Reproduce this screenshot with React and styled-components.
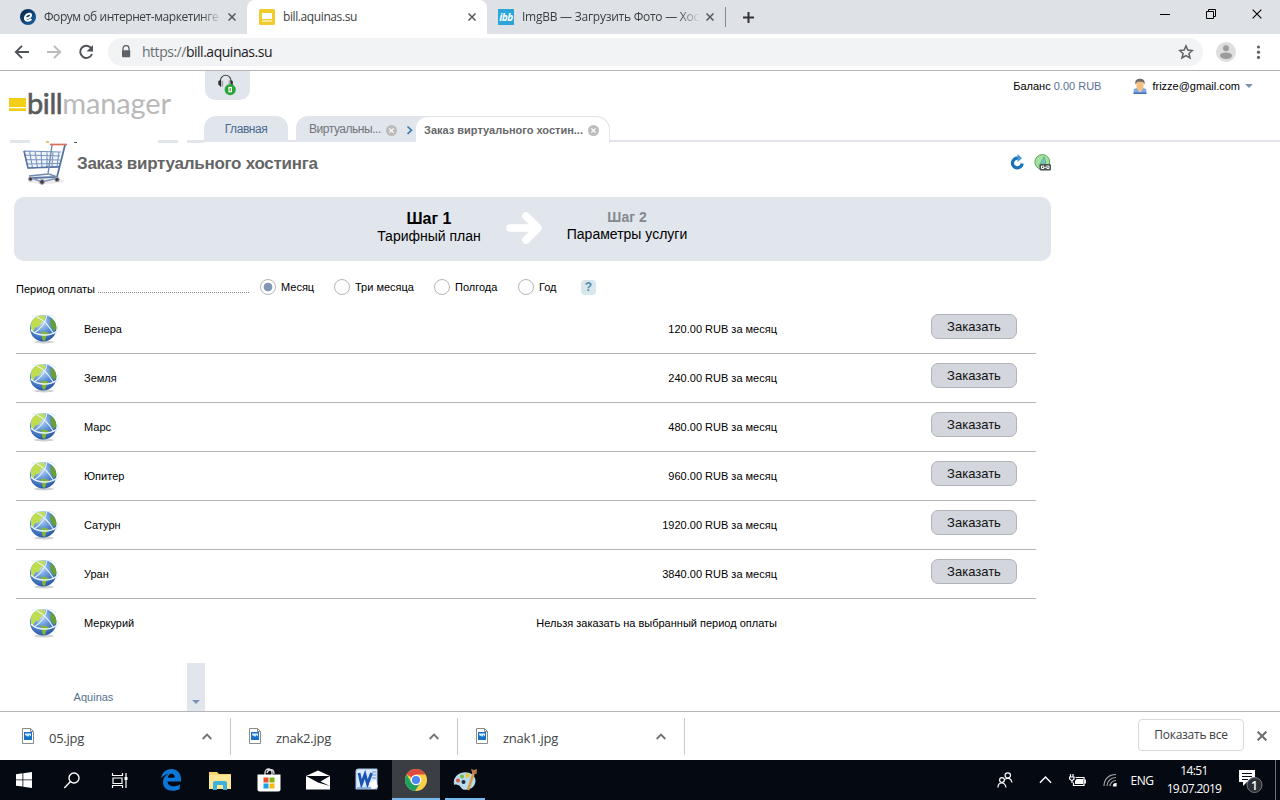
import React, { Fragment } from 'react';
import styled, { createGlobalStyle } from 'styled-components';

const GlobalStyle = createGlobalStyle`
	* {
		box-sizing: border-box;
	}

	body {
		margin: 0;
		background: #fff;
		overflow: hidden;
		font-family: "Liberation Sans", Arial, sans-serif;
		font-size: 11px;
		color: #000;
	}

	svg {
		display: block;
		flex: none;
	}
`

const systemFont = '"Open Sans", "Noto Sans", sans-serif';

const Screen = styled.div`
	width: 1280px;
	height: 800px;
	display: flex;
	flex-direction: column;
	overflow: hidden;
`

/* browser */

const TabStrip = styled.div`
	height: 34px;
	flex: none;
	display: flex;
	background: #dee1e6;
	font-family: ${systemFont};
`

const BrowserTab = styled.div`
	width: ${props => props.$width}px;
	height: 34px;
	display: flex;
	align-items: center;
	padding: 0 11px 0 ${props => props.$left}px;
	background: ${props => props.$active ? '#fff' : 'transparent'};
	border-radius: ${props => props.$active ? '8px 8px 0 0' : '0'};
`

const BrowserTabTitle = styled.span`
	flex: 1;
	margin: 0 6px 0 8px;
	white-space: nowrap;
	font-size: 12px;
	line-height: 18px;
	letter-spacing: ${props => props.$spacing || 0}px;
	color: #3c4043;
	mask-image: ${props => props.$fade ? 'linear-gradient(to right, #000 88%, transparent)' : 'none'};
`

const NewTab = styled.div`
	display: flex;
	align-items: center;
	padding-left: 16px;
`

const TabDivider = styled.div`
	width: 1px;
	height: 20px;
	margin-top: 7px;
	background: #85888c;
`

const WindowButtons = styled.div`
	display: flex;
	margin-left: auto;
`

const WindowButton = styled.div`
	width: 46px;
	height: 28px;
	display: flex;
	align-items: center;
	justify-content: center;
`

const Toolbar = styled.div`
	height: 37px;
	flex: none;
	display: flex;
	align-items: center;
	padding: 0 13px 0 12px;
	border-bottom: 1px solid #b6b4b6;
	font-family: ${systemFont};
`

const NavButtons = styled.div`
	display: flex;
	gap: 12px;
	margin-right: 12px;
`

const Address = styled.div`
	flex: 1;
	height: 28px;
	display: flex;
	align-items: center;
	padding: 0 9px 0 12px;
	border-radius: 14px;
	background: #f1f3f4;
	color: #202124;
	font-size: 14px;
	letter-spacing: -0.48px;
`

const Url = styled.span`
	flex: 1;
	margin-left: 10px;
	line-height: 20px;
`

const Scheme = styled.span`
	color: #6b6f73;
`

const ToolbarEnd = styled.div`
	display: flex;
	align-items: center;
	gap: 11px;
	margin-left: 13px;
`

/* billing page */

const Page = styled.main`
	flex: 1;
	min-height: 0;
	display: flex;
	flex-direction: column;
`

const Header = styled.header`
	height: 72px;
	flex: none;
	display: grid;
	grid-template-columns: 204px 1fr;
`

const Brand = styled.div`
	display: flex;
	flex-direction: column;
	justify-content: space-between;
`

const Logo = styled.div`
	display: flex;
	align-items: center;
	height: 36px;
	margin: 15px 0 0 9px;
`

const LogoText = styled.span`
	margin: -2px 0 0 1px;
	font-family: Lato, sans-serif;
	font-size: 29px;
	line-height: 36px;
	letter-spacing: -0.15px;
	color: #b9b9b9;
`

const LogoBold = styled.span`
	color: #58595b;
	letter-spacing: -0.4px;
	-webkit-text-stroke: 0.6px #58595b;
`

const HeaderMain = styled.div`
	display: flex;
	flex-direction: column;
	justify-content: space-between;
`

const HeaderTop = styled.div`
	display: flex;
	justify-content: space-between;
`

const Support = styled.div`
	width: 45px;
	height: 29px;
	margin-left: 1px;
	padding-right: 2px;
	display: flex;
	justify-content: center;
	border-radius: 0 0 10px 10px;
	background: #e1e6ed;
`

const Account = styled.div`
	height: 30px;
	display: flex;
	align-items: center;
	padding-right: 27px;
	line-height: 16px;
	font-size: 11px;
`

const Balance = styled.span`
	margin-right: 32px;
`

const Amount = styled.span`
	color: #587093;
`

const Email = styled.span`
	margin: 0 5px 0 5px;
`

const PageTabs = styled.div`
	height: 27px;
	display: flex;
	align-items: flex-end;
	background: linear-gradient(#e1e4ea, #e1e4ea) 0 24px / 100% 2px no-repeat;
	font-size: 12px;
	line-height: 27px;
	color: #717579;
`

const HomeTab = styled.div`
	width: 84px;
	height: 27px;
	margin-right: 8px;
	text-align: center;
	letter-spacing: -0.45px;
	border-radius: 12px 12px 0 0;
	background: linear-gradient(#e1e6ed, #e1e6ed) 0 0 / 100% 26px no-repeat;
	color: #476b91;
`

const TabChain = styled.div`
	display: flex;
	height: 27px;
	border-radius: 12px 14px 0 0;
	background: linear-gradient(#e1e6ed, #e1e6ed) 0 0 / 100% 26px no-repeat;
`

const PageTab = styled.div`
	width: 120px;
	display: flex;
	align-items: center;
	padding-left: 13px;
	letter-spacing: -0.46px;
`

const CurrentTab = styled.div`
	width: 194px;
	display: flex;
	align-items: center;
	padding-left: 8px;
	border: solid #e1e4ea;
	border-width: 1px 1px 0 0;
	border-radius: 12px 14px 0 0;
	background: #fff;
	font-size: 11px;
	line-height: 25px;
	font-weight: bold;
	color: #66686a;
	white-space: nowrap;

	&::before {
		content: '';
	}
`

const CloseMark = styled.span`
	margin: 1px 0 0 5px;
`

const StripRow = styled.div`
	display: flex;
	height: 3px;
`

const Strip = styled.div`
	width: ${props => props.$width}px;
	height: ${props => props.$height || 3}px;
	margin-left: ${props => props.$left}px;
	align-self: flex-end;
	background: ${props => props.$color || '#e1e6ed'};
`

const TitleRow = styled.div`
	width: 1051px;
	height: 54px;
	flex: none;
	display: flex;
	align-items: flex-start;
	padding-left: 22px;
`

const Title = styled.h1`
	flex: 1;
	margin: 11px 0 0 9px;
	font-size: 17px;
	line-height: 20px;
	letter-spacing: -0.27px;
	color: #656565;
`

const TitleActions = styled.div`
	display: flex;
	gap: 9px;
	margin-top: 11px;
`

const Steps = styled.div`
	width: 1037px;
	height: 64px;
	flex: none;
	display: flex;
	justify-content: center;
	margin-left: 14px;
	padding: 12px 9px 0 0;
	border-radius: 10px;
	background: #e1e6ed;
`

const Step = styled.div`
	width: 122px;
	text-align: center;
	font-size: 14px;
	line-height: 16px;
	white-space: nowrap;
`

const StepName = styled.div`
	font-size: ${props => props.$current ? 16 : 14}px;
	line-height: ${props => props.$current ? 19 : 17}px;
	font-weight: bold;
	color: ${props => props.$current ? '#000' : '#85888d'};
`

const StepArrow = styled.div`
	margin: 3px 23px 0 16px;
`

const Period = styled.div`
	height: 44px;
	flex: none;
	display: flex;
	align-items: center;
	padding: 8px 0 0 16px;
	line-height: 16px;
`

const PeriodLabel = styled.div`
	width: 233px;
	display: flex;
	align-items: flex-end;
	margin: 4px 11px 0 0;

	&::after {
		content: '';
		flex: 1;
		height: 1px;
		margin: 0 0 4px 3px;
		background: repeating-linear-gradient(to right, #858585 0 1px, transparent 1px 2px);
	}
`

const Option = styled.label`
	display: flex;
	align-items: center;
	width: ${props => props.$width}px;
`

const Radio = styled.span`
	width: 16px;
	height: 16px;
	margin-right: 5px;
	border: 1px solid #b5b5b5;
	border-radius: 50%;
	background: ${props => props.$checked ? 'radial-gradient(circle, #8297b5 0 4px, #fff 4.7px)' : '#fff'};
`

const Help = styled.span`
	width: 15px;
	height: 15px;
	border-radius: 4px;
	background: #d8e7ed;
	color: #548aa7;
	font-size: 12px;
	font-weight: bold;
	line-height: 15px;
	text-align: center;
`

const PlanList = styled.div`
	width: 1020px;
	flex: none;
	margin-left: 16px;
`

const Plan = styled.div`
	height: 49px;
	display: grid;
	grid-template-columns: 68px 300px 393px 1fr;
	border-bottom: 1px solid #b5b5b8;
	line-height: 48px;

	&:last-child {
		border-color: transparent;
	}
`

const PlanIcon = styled.div`
	padding: 8px 0 0 12px;
`

const Price = styled.div`
	text-align: right;
`

const OrderButton = styled.button`
	width: 86px;
	height: 25px;
	margin: 9px 0 0 154px;
	padding: 0;
	border: 1px solid #b0b3b8;
	border-radius: 7px;
	background: #d3d7dd;
	font-family: inherit;
	font-size: 13px;
	line-height: 22px;
	color: #111;
`

const MenuFooter = styled.div`
	display: flex;
	justify-content: space-between;
	width: 205px;
	height: 48px;
	margin-top: auto;
	color: #59718f;
`

const Owner = styled.div`
	width: 187px;
	padding-top: 26px;
	text-align: center;
	line-height: 16px;
`

const MenuScroll = styled.div`
	width: 18px;
	display: flex;
	align-items: flex-end;
	justify-content: center;
	padding-bottom: 7px;
	background: #e1e6ed;
`

/* downloads */

const Downloads = styled.div`
	height: 49px;
	flex: none;
	display: flex;
	align-items: center;
	padding-right: 13px;
	border-top: 1px solid #b6b4b6;
	background: #fff;
	font-family: ${systemFont};
`

const Download = styled.div`
	width: ${props => props.$width}px;
	height: 37px;
	display: flex;
	align-items: center;
	padding: 0 18px 0 ${props => props.$left}px;
	border-right: 1px solid #c8c8c8;
`

const FileName = styled.span`
	flex: 1;
	margin: 4px 0 0 15px;
	font-size: 13px;
	line-height: 18px;
	letter-spacing: -0.25px;
	color: #414347;
`

const ShowAll = styled.div`
	width: 106px;
	height: 32px;
	margin: -2px 13px 0 auto;
	border: 1px solid #d8dadd;
	border-radius: 4px;
	text-align: center;
	font-size: 12px;
	line-height: 29px;
	font-weight: 500;
	letter-spacing: -0.25px;
	color: #3c4043;
`

/* taskbar */

const Taskbar = styled.div`
	height: 40px;
	flex: none;
	display: flex;
	background: #050911;
	color: #fff;
	font-family: ${systemFont};
`

const TaskButton = styled.div`
	width: ${props => props.$app ? 49 : 48}px;
	display: flex;
	align-items: center;
	justify-content: center;
	background: ${props => props.$active ? '#3b3e43' : 'transparent'};
	border-right: 1px solid transparent;
	background-clip: padding-box;
	box-shadow: ${props => props.$active ? 'inset 0 -2px #76b9ed' : 'none'};
`

const Apps = styled.div`
	display: flex;
	margin-left: 3px;
`

const PaintButton = styled.div`
	width: 40px;
	margin-left: 4px;
	display: flex;
	align-items: center;
	justify-content: center;
	box-shadow: inset 0 -2px #76b9ed;
`

const Tray = styled.div`
	margin-left: auto;
	display: flex;
	align-items: center;
	font-size: 12px;
`

const TrayItem = styled.div`
	width: ${props => props.$width}px;
	display: flex;
	justify-content: center;
`

const Language = styled.span`
	width: 34px;
	text-align: center;
	letter-spacing: -0.4px;
`

const Clock = styled.div`
	width: 70px;
	text-align: center;
	line-height: 18px;
	letter-spacing: -0.65px;
`

const Notifications = styled.div`
	width: 46px;
	padding-left: 10px;
`

const DesktopEdge = styled.div`
	width: 5px;
	height: 40px;
	border-left: 1px solid #6c6f75;
`

const plans = [
	{ name: 'Венера', price: '120.00 RUB за месяц' },
	{ name: 'Земля', price: '240.00 RUB за месяц' },
	{ name: 'Марс', price: '480.00 RUB за месяц' },
	{ name: 'Юпитер', price: '960.00 RUB за месяц' },
	{ name: 'Сатурн', price: '1920.00 RUB за месяц' },
	{ name: 'Уран', price: '3840.00 RUB за месяц' },
	{ name: 'Меркурий', price: null },
];

const periods = [
	{ name: 'Месяц', width: 74, checked: true },
	{ name: 'Три месяца', width: 100 },
	{ name: 'Полгода', width: 84 },
	{ name: 'Год', width: 63 },
];

const files = [
	{ name: '05.jpg', width: 231, left: 22 },
	{ name: 'znak2.jpg', width: 227, left: 18 },
	{ name: 'znak1.jpg', width: 227, left: 18 },
];

const Cross = ({ size = 8, color = '#55585c', width = 1.5 }) => (
	<svg width={size} height={size} viewBox="0 0 8 8" stroke={color} strokeWidth={width}>
		<path d="M.5.5l7 7M7.5.5l-7 7" />
	</svg>
)

const ForumIcon = () => (
	<svg width="16" height="16" viewBox="0 0 16 16">
		<defs>
			<linearGradient id="forum" x2="1" y2="1">
				<stop stopColor="#07223f" />
				<stop offset="1" stopColor="#1765ad" />
			</linearGradient>
		</defs>
		<circle cx="8" cy="8" r="8" fill="url(#forum)" />
		<path d="M4.5 9.3c3.5.1 6.8-1 6.6-3.3-.2-1.9-3.8-1.6-5.4.8-1.5 2.3-1 4.8 1.5 5 1.7.1 3.2-.7 4.2-1.8" fill="none" stroke="#fff" strokeWidth="2" />
	</svg>
)

const BillIcon = () => (
	<svg width="16" height="16" viewBox="0 0 16 16">
		<rect width="16" height="16" rx="1.5" fill="#f1cc2c" />
		<path d="M3 4h10v6H3z" fill="#fff" />
		<path d="M3 11h10v2H3z" fill="#f8e795" />
	</svg>
)

const IbbBox = styled.span`
	width: 16px;
	height: 16px;
	background: #2ba4d8;
	color: #fff;
	font: italic bold 10px/16px "Open Sans", sans-serif;
	text-align: center;
	letter-spacing: -0.4px;
`

const NavArrow = ({ color, flip }) => (
	<svg width="20" height="20" viewBox="0 0 20 20" fill="none" stroke={color} strokeWidth="1.9">
		<path d={flip ? 'M3 10h13M10 3.8l6.2 6.2-6.2 6.2' : 'M17 10H4M10 3.8L3.8 10l6.2 6.2'} />
	</svg>
)

const Reload = () => (
	<svg width="20" height="20" viewBox="0 0 20 20">
		<path d="M15.4 6.4A6.1 6.1 0 1 0 16 12" fill="none" stroke="#505357" strokeWidth="2" />
		<path d="M17 3v6.5h-6.5z" fill="#505357" />
	</svg>
)

const Lock = () => (
	<svg width="12" height="14" viewBox="0 0 12 14">
		<path d="M3 6V3.6a3 3 0 0 1 6 0V6" fill="none" stroke="#5f6368" strokeWidth="1.3" />
		<rect x="2" y="5.3" width="8.2" height="7" rx="1" fill="#5f6368" />
	</svg>
)

const Star = () => (
	<svg width="16" height="16" viewBox="0 0 16 16">
		<path d="M8 1.9l1.8 4.2 4.6.4-3.5 3 1.1 4.5L8 11.6 4 14l1.1-4.5-3.5-3 4.6-.4z" fill="none" stroke="#5f6368" strokeWidth="1.5" />
	</svg>
)

const Profile = () => (
	<svg width="20" height="20" viewBox="0 0 20 20">
		<circle cx="10" cy="10" r="10" fill="#dedede" />
		<circle cx="10" cy="6.2" r="3" fill="#9c9c9c" />
		<ellipse cx="10" cy="13.7" rx="6" ry="3.3" fill="#9c9c9c" />
	</svg>
)

const Dots = () => (
	<svg width="20" height="20" viewBox="0 0 20 20" fill="#5f6368">
		<circle cx="11.5" cy="5" r="1.6" />
		<circle cx="11.5" cy="10.2" r="1.6" />
		<circle cx="11.5" cy="15.4" r="1.6" />
	</svg>
)

const Headset = () => (
	<svg width="18" height="25" viewBox="0 0 18 25">
		<path d="M2.5 12V9.500a5.2 5.2 0 0 1 10.400 0V12" fill="none" stroke="#444" strokeWidth="1.1" />
		<path d="M.3 10L3 8.800v7.200L.3 13.500zM12.500 9l2.300 1v4l-2.300 1z" fill="#2c2c2c" />
		<path d="M3.300 9.500l2 .4v5.300l-2 .8zM10.500 9.500h1.800V13h-1.800z" fill="#aaa" />
		<circle cx="12.2" cy="18.6" r="5.6" fill="#2aa636" />
		<rect x="11" y="16.500" width="2.400" height="4.200" fill="none" stroke="#fff" strokeWidth="1.2" />
	</svg>
)

const Person = () => (
	<svg width="14" height="17" viewBox="0 0 14 17">
		<path d="M.5 16l.3-5L4 10h6l3.200 1 .3 5z" fill="#7fa9e2" />
		<path d="M4 10l3 4.500 3-4.500z" fill="#f4f6fa" />
		<path d="M3.500 4h7v3.500c0 3.500-2 6-3.500 6s-3.500-2.500-3.500-6z" fill="#f5bd7e" />
		<path d="M2.500 6.500C1.500 2 4 .7 7 .7s5.400 1.500 4.500 5.800L10 4l-5.500-.3z" fill="#6f6c68" />
		<path d="M.5 14.500h13V16H.5z" fill="#3e70bb" />
	</svg>
)

const Caret = () => (
	<svg width="8" height="4" viewBox="0 0 8 4">
		<path d="M0 0h8L4 4z" fill="#7c93b3" />
	</svg>
)

const RoundClose = () => (
	<svg width="11" height="11" viewBox="0 0 11 11">
		<circle cx="5.5" cy="5.5" r="5.5" fill="#bcbcbc" />
		<path d="M3.3 3.3l4.4 4.4M7.7 3.3L3.3 7.7" stroke="#fff" strokeWidth="1.2" />
	</svg>
)

const Cart = () => (
	<svg width="46" height="43" viewBox="0 0 46 43" fill="none">
		<ellipse cx="24" cy="38" rx="18" ry="3" fill="#ececee" />
		<path d="M2 8l36 1-1 15-29 1z" fill="#f1f5fb" />
		<path d="M2 8l37 1M3 12l35 1M4 16.500l34 .5M5 21l33-.5M6 25l31-1.500M2 8l4 17M7.500 8l3 17M13 8l2.500 17M19 8l1 16.500M25 8.500v16M31 8.500l-1 15.500M37 9l-2 15" stroke="#7593c0" strokeWidth="1.1" />
		<path d="M2 8l4 17 31-1" stroke="#54719f" strokeWidth="1.5" />
		<path d="M43 2l-8 32L9 35" stroke="#56749f" strokeWidth="1.8" />
		<path d="M30 2l-4 29-19 2M27 31l8 3" stroke="#7189b2" strokeWidth="1.4" />
		<path d="M28 1.500h17" stroke="#d8705d" strokeWidth="1.7" />
		<path d="M7 34l13 5 15-4" stroke="#7e96bc" strokeWidth="1.6" />
		<g fill="#403f45" stroke="#a3a5aa">
			<circle cx="8.500" cy="36" r="2" />
			<circle cx="20" cy="39" r="2.4" />
			<circle cx="35" cy="36.500" r="2.2" />
		</g>
	</svg>
)

const RefreshIcon = () => (
	<svg width="16" height="16" viewBox="0 0 16 16">
		<path d="M9 4.200A4.900 4.900 0 1 0 13.200 9.500" fill="none" stroke="#1971ba" strokeWidth="3.200" />
		<path d="M8.500 0L13 4.200 8.500 8z" fill="#3f9ad8" />
	</svg>
)

const LinkIcon = () => (
	<svg width="17" height="17" viewBox="0 0 17 17">
		<circle cx="8.3" cy="8" r="7.4" fill="#a7dfa1" stroke="#56aa52" />
		<path d="M5 12l5-9 2 6z" fill="#78c6b9" stroke="#5bb0a0" />
		<rect x="5.500" y="10" width="11.500" height="6.500" rx="1.5" fill="#4b554c" />
		<path d="M10 12H7.500v2.500H10M12.500 12H15v2.500h-2.500M9 13.250h4.500" fill="none" stroke="#fff" />
	</svg>
)

const Globe = () => (
	<svg width="32" height="32" viewBox="0 0 32 32">
		<defs>
			<radialGradient id="sea" cx=".42" cy=".3" r=".75">
				<stop stopColor="#bfdbf7" />
				<stop offset=".5" stopColor="#5d90d6" />
				<stop offset="1" stopColor="#2250a0" />
			</radialGradient>
		</defs>
		<ellipse cx="16" cy="29" rx="10" ry="1.5" fill="#cfd1d4" />
		<circle cx="15.2" cy="15.200" r="13.2" fill="url(#sea)" />
		<path d="M3 11c1-5 5-8.500 11-8.800l3.500 1.300-1 4-3.500 2-2 4-4 1-1 3-3 1z" fill="#c0dc4f" />
		<path d="M13 18.500l5 .5 3 1.500-3 3.500-1 4-2.500-1-.5-4z" fill="#85b535" />
		<path d="M23 5c3 2 5.300 6 5.400 10l-2 3-3-4-1-4z" fill="#69a131" />
		<path d="M9 4c5 2 12 9 17 17M6 20C14 15 18 9 19 2" fill="none" stroke="#e8f2fb" strokeWidth="1.1" />
		<path d="M3 17c6 6 18 7 26 1" fill="none" stroke="#eef6fc" strokeWidth="1.4" />
		<path d="M4 3l20-.5 4 3M29 12l1.500 5-3 4" fill="none" stroke="#cce5f5" strokeWidth=".7" />
	</svg>
)

const FileIcon = () => (
	<svg width="12" height="16" viewBox="0 0 12 16">
		<path d="M.5.5h8l3 3v12H.5z" fill="#fff" stroke="#8b8b8b" />
		<path d="M8.5.5v3h3" fill="none" stroke="#8b8b8b" />
		<path d="M2 4h8v8H2z" fill="#1673c5" />
		<path d="M3 5.500h6v3L7.500 7 6 9 5 7.500 4 8 3 6.500z" fill="#d9f0ff" />
	</svg>
)

const Chevron = ({ color = '#707276', width = 10, stroke = 1.8 }) => (
	<svg width={width} height={width * 0.7} viewBox="0 0 10 7">
		<path d="M.7 6L5 1.6 9.3 6" fill="none" stroke={color} strokeWidth={stroke} />
	</svg>
)

const Edge = () => (
	<svg width="20" height="22" viewBox="0 0 20 22">
		<path d="M0 9.5C1 3.5 5 0 10.3 0 16.5 0 20 4.5 20 10v2.5H6.500c.2 3.300 2.800 4.700 6 4.700 2.400 0 4.500-.7 6.300-1.800v4.500C16.800 21 14.500 21.700 11.600 21.700 5.800 21.700 2 18.200 2 13.200c0-3.600 2-6.600 5.200-8.200C4.300 5.200 1.700 7 0 9.500zm6.800-.8h7c0-2.700-1.200-4-3.300-4-2 0-3.300 1.500-3.700 4z" fill="#0b78d7" />
	</svg>
)

const Folder = () => (
	<svg width="22" height="19" viewBox="0 0 22 19">
		<path d="M0 1h8l2 2h12v15H0z" fill="#f6d36c" />
		<path d="M1 4h21v14H0V6z" fill="#fde796" />
		<path d="M4 12q0-2 2-2h10q2 0 2 2v7h-4v-5H8v5H4z" fill="#3fb2d9" />
	</svg>
)

const Store = () => (
	<svg width="24" height="24" viewBox="0 0 24 24">
		<path d="M8 7V5a3.5 4 0 0 1 7 0v2M10 5c1-4 7-5 7 1" fill="none" stroke="#ddd" strokeWidth="1.3" />
		<path d="M.5 6.500h23v15q0 2-2 2h-19q-2 0-2-2z" fill="#fff" />
		<path d="M6.500 9.500h5v5h-5z" fill="#e6512b" />
		<path d="M12.500 9.500h5v5h-5z" fill="#7fb510" />
		<path d="M6.500 15.500h5v5h-5z" fill="#1b9fe8" />
		<path d="M12.500 15.500h5v5h-5z" fill="#fcb813" />
	</svg>
)

const Mail = () => (
	<svg width="24" height="20" viewBox="0 0 24 20">
		<path d="M0 6l12-5.500L24 6v13.500H0z" fill="#fff" />
		<path d="M0 6h24l-9.500 5.500 9.500 4.500-12-3.500z" fill="#050911" />
	</svg>
)

const Word = () => (
	<svg width="24" height="24" viewBox="0 0 24 24">
		<path d="M1 3q0-2 2-2h19v20H1z" fill="#dbe9fa" stroke="#a4c2e8" />
		<path d="M17 4h4M17 7h4M17 10h4" stroke="#6190d4" />
		<path d="M4 5l2.500 11L10 6.500l2.500 9.500L16.500 5" fill="none" stroke="#1954b3" strokeWidth="2.800" />
		<path d="M14 15l7-3 2 7-6 2z" fill="#fff" />
		<path d="M2 20h14" stroke="#79a4db" strokeWidth="1.5" />
	</svg>
)

const Chrome = () => (
	<svg width="22" height="22" viewBox="0 0 22 22">
		<circle cx="11" cy="11" r="11" fill="#fbcf45" />
		<path d="M11 11L1.500 5.500A11 11 0 0 1 20.500 5.500H11z" fill="#dd4b3e" />
		<path d="M1.500 5.500A11 11 0 0 0 10 22l5.500-8.500L11 11 6 13z" fill="#1da160" />
		<circle cx="11" cy="11" r="5.3" fill="#fff" />
		<circle cx="11" cy="11" r="4.1" fill="#4b87ec" />
	</svg>
)

const Paint = () => (
	<svg width="25" height="24" viewBox="0 0 25 24">
		<path d="M8 5C3 7 0 11 1 16c.6 2 4 .4 5.500 1.700 2 1.800 2 4 6 4 6 0 10-4 10-9C22.500 6 14 2.500 8 5z" fill="#b6dcec" />
		<circle cx="5" cy="12.500" r="2" fill="#dd574d" />
		<circle cx="9" cy="8.500" r="2" fill="#79ba45" />
		<circle cx="14.500" cy="7.500" r="2.2" fill="#f0c13b" />
		<circle cx="10.500" cy="14" r="2" fill="#182c3b" />
		<path d="M21 4l-6 18" stroke="#d59a4c" strokeWidth="2.6" />
		<path d="M18 1l3 1 3-1-.5 5h-4z" fill="#b77c4d" />
	</svg>
)

const renderPlan = plan => (
	<Plan key={plan.name}>
		<PlanIcon><Globe /></PlanIcon>
		<div>{plan.name}</div>
		<Price>{plan.price || 'Нельзя заказать на выбранный период оплаты'}</Price>
		{plan.price && <OrderButton>Заказать</OrderButton>}
	</Plan>
)

const Browser = () => (
	<Fragment>
		<TabStrip>
			<BrowserTab $width={247} $left={20}>
				<ForumIcon />
				<BrowserTabTitle $fade $spacing={-0.45}>Форум об интернет-маркетинге</BrowserTabTitle>
				<Cross />
			</BrowserTab>
			<BrowserTab $width={240} $left={12} $active>
				<BillIcon />
				<BrowserTabTitle $spacing={-0.4}>bill.aquinas.su</BrowserTabTitle>
				<Cross />
			</BrowserTab>
			<BrowserTab $width={238} $left={11}>
				<IbbBox>ibb</IbbBox>
				<BrowserTabTitle $fade $spacing={-0.25}>ImgBB — Загрузить Фото — Хос</BrowserTabTitle>
				<Cross />
			</BrowserTab>
			<TabDivider />
			<NewTab>
				<svg width="13" height="13" viewBox="0 0 13 13">
					<path d="M6.5 1v11M1 6.5h11" stroke="#303236" strokeWidth="2" />
				</svg>
			</NewTab>
			<WindowButtons>
				<WindowButton>
					<svg width="10" height="10"><path d="M0 5.5h10" stroke="#000" /></svg>
				</WindowButton>
				<WindowButton>
					<svg width="10" height="10" fill="none" stroke="#000">
						<path d="M.5 2.5h7v7h-7zM2.5 2.5v-2h7v7h-2" />
					</svg>
				</WindowButton>
				<WindowButton><Cross size={10} color="#000" width={0.9} /></WindowButton>
			</WindowButtons>
		</TabStrip>
		<Toolbar>
			<NavButtons>
				<NavArrow color="#505357" />
				<NavArrow color="#b9bbbd" flip />
				<Reload />
			</NavButtons>
			<Address>
				<Lock />
				<Url><Scheme>https://</Scheme>bill.aquinas.su</Url>
				<Star />
			</Address>
			<ToolbarEnd>
				<Profile />
				<Dots />
			</ToolbarEnd>
		</Toolbar>
	</Fragment>
)

const PageHeader = () => (
	<Header>
		<Brand>
			<Logo>
				<svg width="17" height="14" viewBox="0 0 17 14">
					<path d="M0 1h17v9H0zM0 11.2h17V14H0z" fill="#f2cf16" />
				</svg>
				<LogoText><LogoBold>bill</LogoBold>manager</LogoText>
			</Logo>
			{/* upper edge of the side menu, its rest lies under the order form */}
			<StripRow>
				<Strip $left={10} $width={20} />
				<Strip $left={16} $width={3} $height={2} $color="#e2c46a" />
				<Strip $left={25} $width={3} $height={1} $color="#555" />
				<Strip $left={81} $width={20} />
				<Strip $left={9} $width={17} />
			</StripRow>
		</Brand>
		<HeaderMain>
			<HeaderTop>
				<Support><Headset /></Support>
				<Account>
					<Balance>Баланс <Amount>0.00 RUB</Amount></Balance>
					<Person />
					<Email>frizze@gmail.com</Email>
					<Caret />
				</Account>
			</HeaderTop>
			<PageTabs>
				<HomeTab>Главная</HomeTab>
				<TabChain>
					<PageTab>
						Виртуальны...
						<CloseMark><RoundClose /></CloseMark>
						<svg width="16" height="10" viewBox="0 0 16 10">
							<path d="M10.500 1.500l4 3.700-4 3.700" fill="none" stroke="#3b7cae" strokeWidth="1.7" />
						</svg>
					</PageTab>
					<CurrentTab>
						Заказ виртуального хостин...
						<CloseMark><RoundClose /></CloseMark>
					</CurrentTab>
				</TabChain>
			</PageTabs>
		</HeaderMain>
	</Header>
)

const OrderPage = () => (
	<Page>
		<PageHeader />
		<TitleRow>
			<Cart />
			<Title>Заказ виртуального хостинга</Title>
			<TitleActions>
				<RefreshIcon />
				<LinkIcon />
			</TitleActions>
		</TitleRow>
		<Steps>
			<Step>
				<StepName $current>Шаг 1</StepName>
				Тарифный план
			</Step>
			<StepArrow>
				<svg width="37" height="32" viewBox="0 0 37 32">
					<path d="M4 16h27M20 4l12 12-12 12" fill="none" stroke="#fff" strokeWidth="7.5" strokeLinecap="round" strokeLinejoin="round" />
				</svg>
			</StepArrow>
			<Step>
				<StepName>Шаг 2</StepName>
				Параметры услуги
			</Step>
		</Steps>
		<Period>
			<PeriodLabel>Период оплаты</PeriodLabel>
			{periods.map(period => (
				<Option key={period.name} $width={period.width}>
					<Radio $checked={period.checked} />
					{period.name}
				</Option>
			))}
			<Help>?</Help>
		</Period>
		<PlanList>{plans.map(renderPlan)}</PlanList>
		<MenuFooter>
			<Owner>Aquinas</Owner>
			<MenuScroll><Caret /></MenuScroll>
		</MenuFooter>
	</Page>
)

const DownloadBar = () => (
	<Downloads>
		{files.map(file => (
			<Download key={file.name} $width={file.width} $left={file.left}>
				<FileIcon />
				<FileName>{file.name}</FileName>
				<Chevron />
			</Download>
		))}
		<ShowAll>Показать все</ShowAll>
		<Cross size={10} color="#6b6e72" width={1.6} />
	</Downloads>
)

const SystemBar = () => (
	<Taskbar>
		<TaskButton>
			<svg width="16" height="16" viewBox="0 0 16 16" fill="#fff">
				<path d="M0 2.3l6.500-1v6.200H0zM7.300 1.200L16 0v7.500H7.300zM0 8.300h6.500v6.300L0 13.700zM7.300 8.300H16V16l-8.700-1.200z" />
			</svg>
		</TaskButton>
		<TaskButton>
			<svg width="17" height="17" viewBox="0 0 17 17" fill="none" stroke="#fff" strokeWidth="1.4">
				<circle cx="11" cy="6" r="5" />
				<path d="M7.5 9.500L1.300 16" />
			</svg>
		</TaskButton>
		<TaskButton>
			<svg width="17" height="17" viewBox="0 0 17 17" fill="none" stroke="#fff" strokeWidth="1.2">
				<path d="M1.500 1v2.500h10V1M2 6h9v5.500H2zM1.500 16v-2.500h10V16M15 1v15" />
				<path d="M13.500 5h3v3h-3z" fill="#fff" stroke="none" />
			</svg>
		</TaskButton>
		<Apps>
			<TaskButton $app><Edge /></TaskButton>
			<TaskButton $app><Folder /></TaskButton>
			<TaskButton $app><Store /></TaskButton>
			<TaskButton $app><Mail /></TaskButton>
			<TaskButton $app><Word /></TaskButton>
			<TaskButton $app $active><Chrome /></TaskButton>
			<PaintButton><Paint /></PaintButton>
		</Apps>
		<Tray>
			<TrayItem $width={52}>
				<svg width="16" height="16" viewBox="0 0 16 16" fill="none" stroke="#fff" strokeWidth="1.2">
					<circle cx="10.8" cy="3.500" r="2.7" />
					<circle cx="5" cy="8" r="2.4" />
					<path d="M1 15.500c0-6 7-6 8 0M8.300 7.300c3-2.300 6-.5 6.700 3.200" />
				</svg>
			</TrayItem>
			<TrayItem $width={28}><Chevron color="#fff" width={13} stroke={1.1} /></TrayItem>
			<TrayItem $width={36}>
				<svg width="17" height="13" viewBox="0 0 17 13" fill="none" stroke="#fff" strokeWidth="1.2">
					<path d="M6.500 3.500H15v8H4.500V8.500M16.300 5.500v4" />
					<path d="M7.500 5H14v5H6V7z" fill="#fff" stroke="none" />
					<path d="M1.500 0v3M4 0v3M.5 3h4.500v2L3.500 6.500h-1L.5 5zM3 6.500V9" />
				</svg>
			</TrayItem>
			<TrayItem $width={30}>
				<svg width="14" height="14" viewBox="0 0 14 14" fill="none" stroke="#aaa" strokeWidth="1.2">
					<path d="M1 13C1 6 6 1.500 13 1.500M4 13c0-5 4-8.500 9-8.500M7 13c0-3 3-5.500 6-5.500" />
					<path d="M10.500 13c0-1.700 1-2.500 2.500-2.500V13z" fill="#fff" stroke="#fff" />
				</svg>
			</TrayItem>
			<Language>ENG</Language>
			<Clock>14:51<br />19.07.2019</Clock>
			<Notifications>
				<svg width="26" height="26" viewBox="0 0 26 26">
					<path d="M0 3h16v12H8l-4 4v-4H0z" fill="#fff" />
					<path d="M3 6.500h10M3 9.500h10M3 12.500h6" stroke="#050911" strokeWidth="1.2" />
					<circle cx="15.5" cy="18" r="7.5" fill="#2c2f34" stroke="#777a7e" />
					<text x="15.500" y="22.500" fill="#fff" fontSize="12" fontWeight="600" textAnchor="middle">1</text>
				</svg>
			</Notifications>
			<DesktopEdge />
		</Tray>
	</Taskbar>
)

const App = () => (
	<Screen>
		<GlobalStyle />
		<Browser />
		<OrderPage />
		<DownloadBar />
		<SystemBar />
	</Screen>
)

export default App
